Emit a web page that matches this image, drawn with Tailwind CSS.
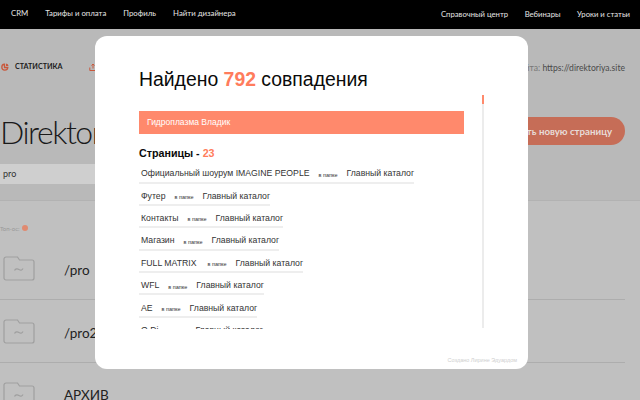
<!DOCTYPE html>
<html><head><meta charset="utf-8"><script src="https://cdn.jsdelivr.net/npm/@tailwindcss/browser@4"></script></head>
<body class="overflow-hidden">
<div class="relative w-[640px] h-[400px] overflow-hidden bg-[#c0c0c0] font-['Lato',sans-serif]">
  <header class="h-[29px] bg-black text-[#e6e6e6] flex justify-between items-center pl-[11px] pr-[10px]">
    <nav class="flex gap-[17px] pb-[2px] text-[7.8px]"><span>CRM</span><span>Тарифы и оплата</span><span>Профиль</span><span>Найти дизайнера</span></nav>
    <nav class="flex gap-[16.5px] text-[7.7px]"><span>Справочный центр</span><span>Вебинары</span><span>Уроки и статьи</span></nav>
  </header>
  <section class="h-[172px] bg-[#b9b9b9] border-b border-[#b2b2b2] pt-[24px]">
    <div class="h-[29px] flex items-center justify-between pr-[15px]">
      <div class="flex items-center text-[7.2px] font-bold text-[#1c1c1c]">
        <svg class="w-[8px] h-[8px] ml-[1px]" viewBox="0 0 8 8" fill="none" stroke="#c9583c" stroke-width="1.3"><path d="M3.5 1.2a3 3 0 1 0 3.3 3.3H3.5z"/><path d="M5 .5a2.6 2.6 0 0 1 2.5 2.5H5z" fill="#c9583c" stroke="none"/></svg>
        <span class="ml-[6px]">СТАТИСТИКА</span>
        <svg class="w-[8px] h-[8px] ml-[27px]" viewBox="0 0 8 8" fill="none" stroke="#c9583c" stroke-width="1"><path d="M4 5.5V1M2.5 2.5 4 1l1.5 1.5M.8 4.5v3h6.4v-3"/></svg>
      </div>
      <div class="text-[8.6px] text-[#777] pt-[2px]">Сайта: <span class="text-[#4a4a4a]">https://direktoriya.site</span></div>
    </div>
    <div class="flex items-center justify-between pr-[15px] mt-[25px] h-[50px]">
      <div class="text-[32px] leading-[50px] font-light tracking-[-1.5px] text-[#1a1a1a] whitespace-nowrap">Direktoriya</div>
      <div class="w-[200px] h-[28px] mb-[2px] rounded-full bg-[#c66d57] text-[#e8dcd8] text-[9.7px] font-bold flex items-center justify-end pr-[13px] whitespace-nowrap">Создать новую страницу</div>
    </div>
    <div class="h-[20px] mt-[7px] w-[300px] bg-[#cfcfcf] flex items-center pl-[3px] text-[9px] text-[#333]">pro</div>
  </section>
  <div class="mt-[23px] h-[8px] flex items-center gap-[2px] text-[6px] text-[#999]">Топ-ос:<span class="w-[6px] h-[6px] rounded-full bg-[#e08a70]"></span></div>
  <div class="mt-[5px] w-[625px]">
    <div class="h-[63px] border-b border-[#adadad] flex items-center gap-[29px] pl-[3px] text-[#222] text-[13.5px]">
      <svg class="w-[32px] h-[25px] shrink-0" viewBox="0 0 32 25" fill="none" stroke="#9f9f9f" stroke-width="1.2"><path d="M1 3a2 2 0 0 1 2-2h11.5l2 3H29a2 2 0 0 1 2 2v16a2 2 0 0 1-2 2H3a2 2 0 0 1-2-2z"/><path d="M11.5 14.5c1-2 3-2 4.500-1s3 1 4-1"/></svg><span class="mt-[5px]">/pro</span>
    </div>
    <div class="h-[63px] border-b border-[#adadad] flex items-center gap-[29px] pl-[3px] text-[#222] text-[13.5px]">
      <svg class="w-[32px] h-[25px] shrink-0" viewBox="0 0 32 25" fill="none" stroke="#9f9f9f" stroke-width="1.2"><path d="M1 3a2 2 0 0 1 2-2h11.5l2 3H29a2 2 0 0 1 2 2v16a2 2 0 0 1-2 2H3a2 2 0 0 1-2-2z"/><path d="M11.500 14.500c1-2 3-2 4.500-1s3 1 4-1"/></svg><span class="mt-[5px]">/pro2</span>
    </div>
    <div class="h-[63px] flex items-center gap-[29px] pl-[3px] text-[#222] text-[13.5px]">
      <svg class="w-[32px] h-[25px] shrink-0" viewBox="0 0 32 25" fill="none" stroke="#9f9f9f" stroke-width="1.2"><path d="M1 3a2 2 0 0 1 2-2h11.5l2 3H29a2 2 0 0 1 2 2v16a2 2 0 0 1-2 2H3a2 2 0 0 1-2-2z"/><path d="M11.500 14.500c1-2 3-2 4.500-1s3 1 4-1"/></svg><span class="mt-[2px]">АРХИВ</span>
    </div>
  </div>

  <div class="absolute left-[95px] top-[36px] w-[433px] h-[333px] bg-white rounded-[12px] font-['Liberation_Sans',sans-serif]">
    <h1 class="absolute left-[44px] top-[30px] text-[19.4px] leading-[26px] text-[#0a0a0a] whitespace-nowrap">Найдено <b class="text-[#ff7c5c]">792</b> совпадения</h1>
    <div class="absolute right-[44px] top-[59px] w-[2px] h-[233px] bg-[#ececec]"><div class="w-[2px] h-[9px] bg-[#ff8a6c]"></div></div>
    <div class="absolute left-[44px] top-[75px] w-[325px]">
      <div class="h-[23px] bg-[#ff896c] text-white text-[8.5px] flex items-center pl-[8px]">Гидроплазма Владик</div>
      <h2 class="mt-[12px] text-[10.7px] leading-[14px] font-bold text-[#0a0a0a]">Страницы - <span class="text-[#ff7c5c]">23</span></h2>
      <ul class="mt-[6px] h-[163px] overflow-hidden text-[8.7px] text-[#333] flex flex-col items-start">
        <li class="h-[17.5px] mb-[4.9px] shrink-0 flex items-center pl-[2px] border-b-2 border-[#eeeeee] whitespace-nowrap"><span>Официальный шоурум IMAGINE PEOPLE</span><span class="text-[5.5px] mx-[9px] pt-[2px]">в папке</span><span>Главный каталог</span></li>
        <li class="h-[17.5px] mb-[4.9px] shrink-0 flex items-center pl-[2px] border-b-2 border-[#eeeeee] whitespace-nowrap"><span>Футер</span><span class="text-[5.5px] mx-[9px] pt-[2px]">в папке</span><span>Главный каталог</span></li>
        <li class="h-[17.5px] mb-[4.9px] shrink-0 flex items-center pl-[2px] border-b-2 border-[#eeeeee] whitespace-nowrap"><span>Контакты</span><span class="text-[5.5px] mx-[9px] pt-[2px]">в папке</span><span>Главный каталог</span></li>
        <li class="h-[17.5px] mb-[4.9px] shrink-0 flex items-center pl-[2px] border-b-2 border-[#eeeeee] whitespace-nowrap"><span>Магазин</span><span class="text-[5.5px] mx-[9px] pt-[2px]">в папке</span><span>Главный каталог</span></li>
        <li class="h-[17.5px] mb-[4.9px] shrink-0 flex items-center pl-[2px] border-b-2 border-[#eeeeee] whitespace-nowrap"><span>FULL MATRIX</span><span class="text-[5.5px] ml-[11px] mr-[9px] pt-[2px]">в папке</span><span>Главный каталог</span></li>
        <li class="h-[17.5px] mb-[4.9px] shrink-0 flex items-center pl-[2px] border-b-2 border-[#eeeeee] whitespace-nowrap"><span>WFL</span><span class="text-[5.5px] mx-[9px] pt-[2px]">в папке</span><span>Главный каталог</span></li>
        <li class="h-[17.5px] mb-[4.9px] shrink-0 flex items-center pl-[2px] border-b-2 border-[#eeeeee] whitespace-nowrap"><span>AE</span><span class="text-[5.5px] mx-[9px] pt-[2px]">в папке</span><span>Главный каталог</span></li>
        <li class="h-[17.5px] mb-[4.9px] shrink-0 flex items-center pl-[2px] border-b-2 border-[#eeeeee] whitespace-nowrap"><span>О Di</span><span class="text-[5.5px] mx-[9px] pt-[2px]">в папке</span><span>Главный каталог</span></li>
      </ul>
    </div>
    <div class="absolute right-[11px] bottom-[5px] text-[5.5px] leading-[8px] text-[#cfcfcf]">Создано Лирине Эдуардом</div>
  </div>
</div>
</body></html>
